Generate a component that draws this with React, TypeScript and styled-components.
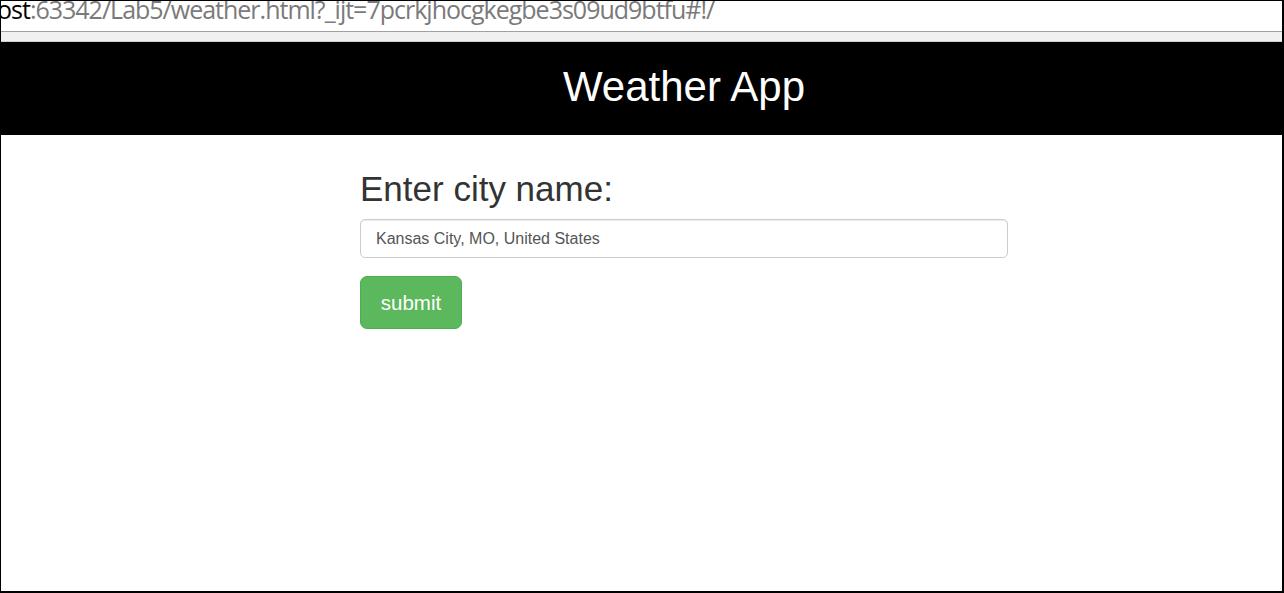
import React from "react";
import styled, { createGlobalStyle } from "styled-components";

const GlobalStyle = createGlobalStyle`
  html, body { margin: 0; padding: 0; background: #fff; }
  body { font-family: "Liberation Sans", Arial, sans-serif; }
  * { box-sizing: border-box; }
`;

const Frame = styled.div`
  width: 1284px;
  height: 593px;
  border-style: solid;
  border-color: #000;
  border-width: 1px 2px 2px 1px;
  overflow: hidden;
  background: #fff;
`;

const AddressBar = styled.div`
  height: 30px;
  overflow: hidden;
  background: #fff;
  white-space: nowrap;
`;

const UrlText = styled.div`
  font-family: "Open Sans", "Noto Sans", sans-serif;
  font-size: 25px;
  line-height: 26px;
  letter-spacing: -1px;
  margin-top: -5px;
  margin-left: -4px;
  color: #7a7a7a;
`;

const Host = styled.span`
  color: #000;
`;

const Chrome = styled.div`
  height: 11px;
  background: #f0f0f0;
  border-top: 1px solid #a0a0a0;
  border-bottom: 1px solid #d0d0d0;
`;

const Page = styled.div`
  width: 1366px;
`;

const Header = styled.header`
  height: 93px;
  background: #000;
  padding-top: 22px;
  text-align: center;
`;

const AppTitle = styled.h1`
  margin: 0;
  font-size: 42px;
  line-height: 46px;
  font-weight: 400;
  color: #fff;
`;

const Content = styled.main`
  width: 648px;
  margin: 0 auto;
  padding-top: 35px;
  display: flex;
  flex-direction: column;
  align-items: flex-start;
`;

const Label = styled.h2`
  margin: 0 0 12px;
  font-size: 35px;
  line-height: 37px;
  font-weight: 400;
  color: #333;
`;

const Input = styled.input`
  width: 100%;
  height: 39px;
  padding: 0 15px;
  font-family: "Liberation Sans", Arial, sans-serif;
  font-size: 16px;
  color: #555;
  background: #fff;
  border: 1px solid #ccc;
  border-radius: 5px;
  box-shadow: inset 0 1px 1px rgba(0, 0, 0, 0.075);
  outline: none;
`;

const SubmitButton = styled.button`
  margin-top: 18px;
  width: 102px;
  height: 53px;
  font-family: "Liberation Sans", Arial, sans-serif;
  font-size: 20.5px;
  color: #fff;
  background: #5cb85c;
  border: 1px solid #4cae4c;
  border-radius: 7px;
  padding: 0;
  cursor: pointer;
`;

export default function App() {
  return (
    <>
      <GlobalStyle />
      <Frame>
        <AddressBar>
          <UrlText>
            <Host>ost</Host>:63342/Lab5/weather.html?_ijt=7pcrkjhocgkegbe3s09ud9btfu#!/
          </UrlText>
        </AddressBar>
        <Chrome />
        <Page>
          <Header>
            <AppTitle>Weather App</AppTitle>
          </Header>
          <Content>
            <Label>Enter city name:</Label>
            <Input defaultValue="Kansas City, MO, United States" />
            <SubmitButton>submit</SubmitButton>
          </Content>
        </Page>
      </Frame>
    </>
  );
}
